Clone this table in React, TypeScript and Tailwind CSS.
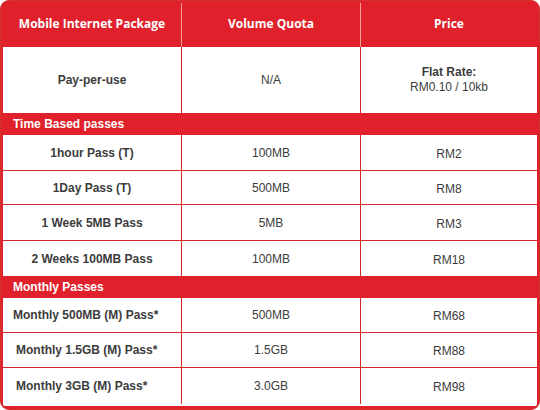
const font = { fontFamily: '"Liberation Sans", Arial, sans-serif' };

type Row = { name: string; quota: string; price: string; h: string; align?: string };

const timeRows: Row[] = [
  { name: "1hour Pass (T)", quota: "100MB", price: "RM2", h: "h-[36px]" },
  { name: "1Day Pass (T)", quota: "500MB", price: "RM8", h: "h-[34px]" },
  { name: "1 Week 5MB Pass", quota: "5MB", price: "RM3", h: "h-[36px]" },
  { name: "2 Weeks 100MB Pass", quota: "100MB", price: "RM18", h: "h-[35px]" },
];

const monthlyRows: Row[] = [
  { name: "Monthly 500MB (M) Pass*", quota: "500MB", price: "RM68", h: "h-[35px]", align: "pl-[10px]" },
  { name: "Monthly 1.5GB (M) Pass*", quota: "1.5GB", price: "RM88", h: "h-[35px]", align: "pl-[13px]" },
  { name: "Monthly 3GB (M) Pass*", quota: "3.0GB", price: "RM98", h: "h-[36px]", align: "pl-[13px]" },
];

function DataRow({ row, last }: { row: Row; last?: boolean }) {
  return (
    <div className={`flex ${row.h} ${last ? "" : "border-b border-[#d7262a]"} bg-white text-[12px] text-[#3c3c3c]`}>
      <div
        className={`w-[178px] flex items-center font-bold ${row.align ? "justify-start " + row.align : "justify-center"}`}
      >
        {row.name}
      </div>
      <div className="w-[1px] bg-[#d7262a]" />
      <div className="w-[178px] flex items-center justify-center">{row.quota}</div>
      <div className="w-[1px] bg-[#d7262a]" />
      <div className="flex-1 flex items-center justify-center pt-[2px]">{row.price}</div>
    </div>
  );
}

function Band({ label }: { label: string }) {
  return (
    <div className="h-[22px] flex items-center pl-[10px] text-[12px] font-bold text-white bg-[#e0202a]">
      {label}
    </div>
  );
}

export default function App() {
  return (
    <div className="w-[540px] h-[410px] bg-white" style={font}>
      <div className="w-full h-full rounded-[9px] border border-[#d2322a] bg-[#e0202a] px-[2px] pb-[3px] flex flex-col">
        {/* header */}
        <div
          className="h-[46px] flex text-white font-bold text-[12px]"
          style={{ fontFamily: '"Open Sans", "Liberation Sans", sans-serif' }}
        >
          <div className="w-[178px] flex items-center justify-center">Mobile Internet Package</div>
          <div className="w-[1px] bg-[#f2a09a] mt-[2px]" />
          <div className="w-[178px] flex items-center justify-center">Volume Quota</div>
          <div className="w-[1px] bg-[#f2a09a] mt-[2px]" />
          <div className="flex-1 flex items-center justify-center">Price</div>
        </div>

        {/* pay per use */}
        <div className="flex h-[66px] bg-white text-[12px] text-[#3c3c3c]">
          <div className="w-[178px] flex items-center justify-center font-bold">Pay-per-use</div>
          <div className="w-[1px] bg-[#d7262a]" />
          <div className="w-[178px] flex items-center justify-center">N/A</div>
          <div className="w-[1px] bg-[#d7262a]" />
          <div className="flex-1 flex flex-col items-center justify-center leading-[15px]">
            <span className="font-bold">Flat Rate:</span>
            <span>RM0.10 / 10kb</span>
          </div>
        </div>

        <Band label="Time Based passes" />
        {timeRows.map((r, i) => (
          <DataRow key={r.name} row={r} last={i === timeRows.length - 1} />
        ))}

        <Band label="Monthly Passes" />
        {monthlyRows.map((r, i) => (
          <DataRow key={r.name} row={r} last={i === monthlyRows.length - 1} />
        ))}
        <div className="flex-1 bg-white rounded-b-[7px]" />
      </div>
    </div>
  );
}
